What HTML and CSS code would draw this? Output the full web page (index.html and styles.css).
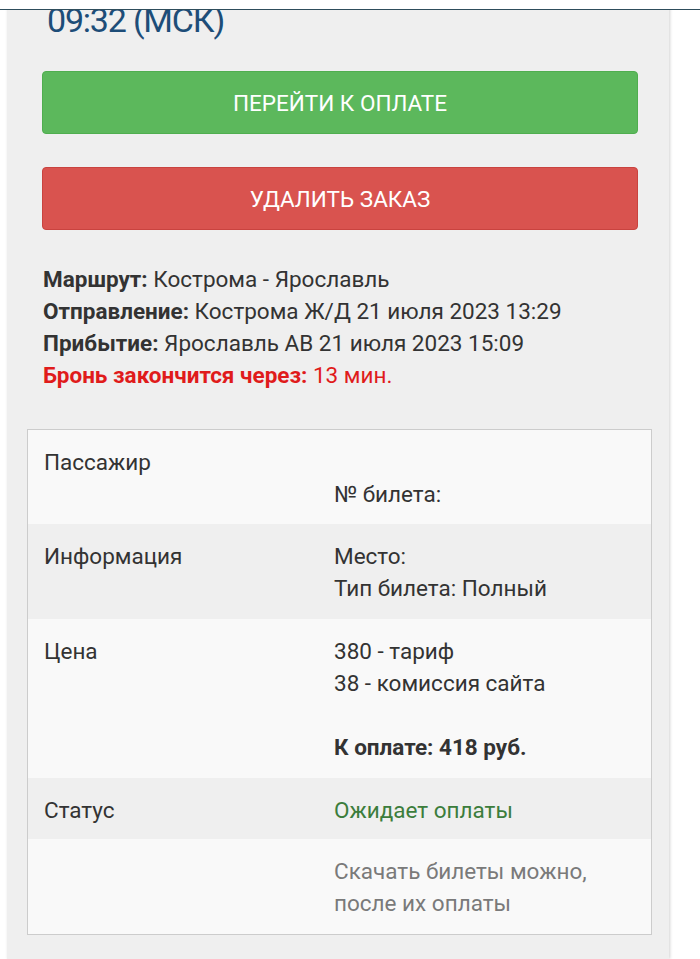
FILE: index.html
```html
<!DOCTYPE html>
<html lang="ru">
<head>
<meta charset="utf-8">
<link rel="stylesheet" href="styles.css">
</head>
<body>
<div class="topbar"></div>
<div class="panel">
  <div class="time">09:32 (МСК)</div>
  <div class="btn btn-green">ПЕРЕЙТИ К ОПЛАТЕ</div>
  <div class="btn btn-red">УДАЛИТЬ ЗАКАЗ</div>
  <div class="info">
    <div><b>Маршрут:</b> Кострома - Ярославль</div>
    <div><b>Отправление:</b> Кострома Ж/Д 21 июля 2023 13:29</div>
    <div><b>Прибытие:</b> Ярославль АВ 21 июля 2023 15:09</div>
    <div class="warn"><b>Бронь закончится через:</b> 13 мин.</div>
  </div>
  <div class="table">
    <div class="row odd first">
      <div class="c1">Пассажир</div>
      <div class="c2"><br>№ билета:</div>
    </div>
    <div class="row even">
      <div class="c1">Информация</div>
      <div class="c2">Место:<br>Тип билета: Полный</div>
    </div>
    <div class="row odd">
      <div class="c1">Цена</div>
      <div class="c2">380 - тариф<br>38 - комиссия сайта<br><br><b>К оплате: 418 руб.</b></div>
    </div>
    <div class="row even short">
      <div class="c1">Статус</div>
      <div class="c2 ok">Ожидает оплаты</div>
    </div>
    <div class="row odd">
      <div class="c1"></div>
      <div class="c2 muted">Скачать билеты можно,<br>после их оплаты</div>
    </div>
  </div>
</div>
</body>
</html>
```
FILE: styles.css
```css
html, body {
  margin: 0;
  padding: 0;
  background: #ffffff;
  font-family: Roboto, "Liberation Sans", sans-serif;
  color: #333333;
  height: 959px;
  overflow: hidden;
}
.topbar {
  position: fixed;
  top: 0;
  left: 0;
  right: 0;
  height: 9px;
  background: #ffffff;
  border-bottom: 1px solid #2e4d5c;
  z-index: 5;
}
.panel {
  margin-left: 7px;
  width: 662px;
  min-height: 959px;
  background: #efefef;
  box-shadow: 1px 0 3px rgba(0,0,0,0.18);
  box-sizing: border-box;
}
.time {
  font-size: 34px;
  line-height: 40px;
  color: #1d4d78;
  padding-left: 40px;
  margin-top: 0;
  height: 36px;
  letter-spacing: -1.2px;
}
.btn {
  margin: 0 31px 0 35px;
  height: 63px;
  border-radius: 4px;
  box-sizing: border-box;
  display: flex;
  align-items: center;
  justify-content: center;
  color: #ffffff;
  font-size: 22.5px;
}
.btn-green {
  margin-top: 35px;
  background: #5cb85c;
  border: 1px solid #4fae4f;
}
.btn-red {
  margin-top: 33px;
  background: #d9534f;
  border: 1px solid #c9433f;
}
.info {
  padding: 33px 0 0 36px;
  font-size: 22.5px;
  line-height: 32px;
  color: #333333;
}
.info b { font-weight: 700; }
.warn { color: #e01b1b; }
.table {
  margin: 38px 17px 0 20px;
  border: 1px solid #cccccc;
  font-size: 22.5px;
  line-height: 32px;
}
.row {
  display: grid;
  grid-template-columns: 290px 1fr;
  padding: 16px 0 15px 0;
}
.row.first { padding-bottom: 14px; }
.row.short { padding-bottom: 13px; }
.odd { background: #f9f9f9; }
.even { background: #efefef; }
.c1 { padding-left: 16px; }
.c2 { padding-left: 16px; }
.ok { color: #3c7d3c; }
.muted { color: #7a7a7a; }
```
